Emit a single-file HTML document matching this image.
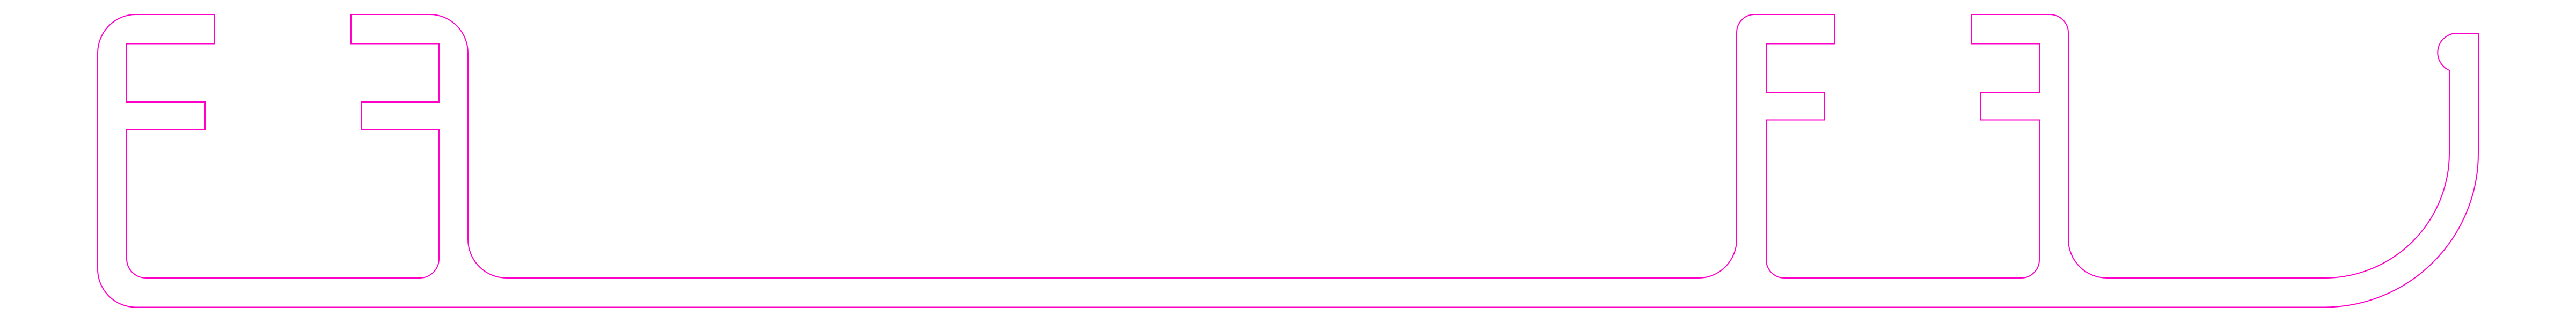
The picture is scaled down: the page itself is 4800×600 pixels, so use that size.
<!DOCTYPE html>
<html><head><meta charset="utf-8"><style>
html,body{margin:0;padding:0;background:#fff;}
svg{display:block;}
</style></head><body>
<svg width="4800" height="600" viewBox="0 0 4800 600" xmlns="http://www.w3.org/2000/svg">
<path fill="none" stroke="#ff00c8" stroke-width="2" d="
M253,27 L400,27 L400,81.5 L236,81.5 L236,190 L382,190 L382,241.5 L236,241.5 L236,482
A36,36 0 0 0 272,518 L782,518 A36,36 0 0 0 818,482 L818,241.5 L673,241.5 L673,190 L818,190 L818,81.5 L654,81.5 L654,27 L801,27
A71,72 0 0 1 872,99 L872,446 A72,72 0 0 0 944,518 L3165,518 A71,72 0 0 0 3236,446 L3236,61
A33,34 0 0 1 3268,27 L3418,27 L3418,81.5 L3291,81.5 L3291,172.6 L3399,172.6 L3399,223.5 L3291,223.5 L3291,484
A34,34 0 0 0 3325,518 L3766,518 A34,34 0 0 0 3800,484 L3800,223.5 L3691,223.5 L3691,172.6 L3800,172.6 L3800,81.5 L3673,81.5 L3673,27 L3819,27
A35,34 0 0 1 3854,61 L3854,446 A72,72 0 0 0 3926,518 L4331,518 A233,233 0 0 0 4564,285 L4564,131
A36,36 0 0 1 4580,62 L4618,62 L4618,285 A287,287 0 0 1 4331,572.5 L253,572.5
A71,71 0 0 1 182,501 L182,99 A71,72 0 0 1 253,27 Z"/>
</svg>
</body></html>
